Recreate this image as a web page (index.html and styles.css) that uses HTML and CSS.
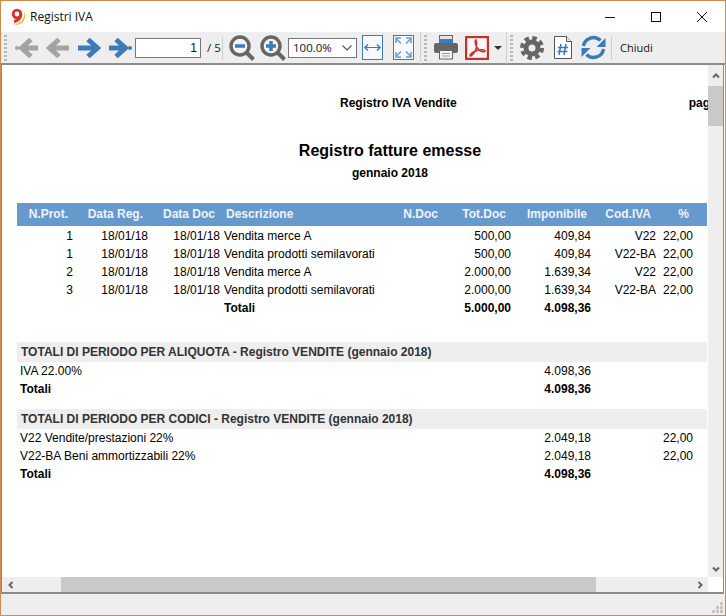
FILE: index.html

```html
<!DOCTYPE html>
<html lang="it">
<head>
  <meta charset="UTF-8" />
  <title>Registri IVA</title>
  <link rel="stylesheet" href="styles.css">
</head>
<body>
  <svg class="defs" width="0" height="0">
    <symbol id="arrow" viewBox="0 0 24 22">
      <path d="M1 11H19" fill="none" stroke="currentColor" stroke-width="5"/>
      <path d="M11 2.500l9.500 8.500-9.500 8.500" fill="none" stroke="currentColor" stroke-width="5"/>
    </symbol>
    <symbol id="arrow-end" viewBox="0 0 24 22">
      <path d="M1 11H17" fill="none" stroke="currentColor" stroke-width="5"/>
      <path d="M8 2.500l9.500 8.500-9.500 8.500" fill="none" stroke="currentColor" stroke-width="5"/>
      <path d="M17 11h5" fill="none" stroke="currentColor" stroke-width="1.500"/>
      <circle cx="22" cy="11" r="2" fill="currentColor"/>
    </symbol>
    <symbol id="chev" viewBox="0 0 8 8">
      <path d="M1 5.500l3-3 3 3" fill="none" stroke="#666" stroke-width="2"/>
    </symbol>
  </svg>

  <div class="window">
    <div class="titlebar">
      <svg class="logo" width="18" height="18" viewBox="0 0 18 18">
        <path d="M3 15c5 2 10 0 12-7 1-3 0-5-1-6 3 3 3 8 0 12-3 3-7 4-11 1z" fill="#e8c23a"/>
        <circle cx="8" cy="6" r="3.800" fill="#fff" stroke="#d8302a" stroke-width="2.800"/>
        <path d="M12 6c0 4-3 7-7 7.500" fill="none" stroke="#d8302a" stroke-width="3"/>
      </svg>
      <span class="title">Registri IVA</span>
      <div class="winbtns">
        <span class="winbtn"><svg width="12" height="12"><path d="M1 6.500h10" stroke="#111"/></svg></span>
        <span class="winbtn"><svg width="12" height="12"><rect x="1.500" y="1.500" width="9" height="9" fill="none" stroke="#111"/></svg></span>
        <span class="winbtn"><svg width="12" height="12"><path d="M1 1l10 10M11 1L1 11" stroke="#111"/></svg></span>
      </div>
    </div>

    <div class="toolbar">
      <span class="grip"></span>
      <span class="tool off"><svg class="flip" width="24" height="22"><use href="#arrow-end"/></svg></span>
      <span class="tool off"><svg class="flip" width="24" height="22"><use href="#arrow"/></svg></span>
      <span class="tool on"><svg width="24" height="22"><use href="#arrow"/></svg></span>
      <span class="tool on"><svg width="24" height="22"><use href="#arrow-end"/></svg></span>
      <input class="pagebox" type="text" value="1" />
      <span class="pagecount">/ 5</span>
      <span class="sep sep-a"></span>
      <span class="tool">
        <svg width="26" height="26" viewBox="0 0 26 26">
          <circle cx="11" cy="11" r="9" fill="#f4f4f4" stroke="#666" stroke-width="3.500"/>
          <path d="M17.500 17.500l7 7" stroke="#666" stroke-width="4"/>
          <path d="M6 11h10" stroke="#3d7ab8" stroke-width="3.500"/>
        </svg>
      </span>
      <span class="tool">
        <svg width="26" height="26" viewBox="0 0 26 26">
          <circle cx="11" cy="11" r="9" fill="#f4f4f4" stroke="#666" stroke-width="3.500"/>
          <path d="M17.500 17.500l7 7" stroke="#666" stroke-width="4"/>
          <path d="M6 11h10M11 6v10" stroke="#3d7ab8" stroke-width="3.500"/>
        </svg>
      </span>
      <div class="zoomsel">
        <span>100.0%</span>
        <svg width="12" height="8"><path d="M1.500 1.500l4.500 4.500 4.500-4.500" fill="none" stroke="#555" stroke-width="1.200"/></svg>
      </div>
      <span class="tool">
        <svg width="21" height="25" viewBox="0 0 21 25">
          <rect x=".5" y=".5" width="20" height="24" fill="#f6f8fb" stroke="#3d7ab8"/>
          <path d="M3 12.500h15" stroke="#3d7ab8"/>
          <path d="M6 9.500l-3 3 3 3M15 9.500l3 3-3 3" fill="none" stroke="#3d7ab8" stroke-width="1.500"/>
        </svg>
      </span>
      <span class="tool">
        <svg width="21" height="25" viewBox="0 0 21 25">
          <rect x=".5" y=".5" width="20" height="24" fill="#f6f8fb" stroke="#3d7ab8"/>
          <path d="M3 3.500l5 5M18 3.500l-5 5M3 21.500l5-5M18 21.500l-5-5" stroke="#6b9bcb" stroke-width="1.500"/>
          <path d="M3 8V3h5M13 3h5v5M3 17v5h5M18 17v5h-5" fill="none" stroke="#6b9bcb" stroke-width="1.500"/>
        </svg>
      </span>
      <span class="sep sep-b"></span>
      <span class="grip grip-b"></span>
      <span class="tool">
        <svg width="26" height="25" viewBox="0 0 26 25">
          <rect x="6.500" y=".5" width="13" height="8" fill="#e4e4e4" stroke="#666"/>
          <rect x="6" y="4" width="14" height="5" fill="#3d7ab8"/>
          <rect x="1" y="8" width="24" height="10" rx="2" fill="#666"/>
          <rect x="6.500" y="15.500" width="13" height="8.500" fill="#f4f4f4" stroke="#666"/>
          <path d="M9 18.500h8M9 21h8" stroke="#7aa3cc"/>
        </svg>
      </span>
      <span class="tool">
        <svg width="24" height="24" viewBox="0 0 24 24">
          <rect x="1" y="1" width="22" height="22" fill="#f7f7f7" stroke="#c8302c" stroke-width="2.400"/>
          <path d="M10.500 4c-1 3 1 7 3.500 10 2 2 6 2.500 6 1s-4-1.500-8-.5-7 3.500-7 5 3-.5 5-4 2-9 1-11.500z" fill="none" stroke="#c8302c" stroke-width="1.500"/>
        </svg>
      </span>
      <span class="caret"></span>
      <span class="sep sep-c"></span>
      <span class="grip grip-c"></span>
      <span class="tool">
        <svg width="24" height="24" viewBox="0 0 24 24">
          <circle cx="12" cy="12" r="10" fill="none" stroke="#666" stroke-width="4" stroke-dasharray="4.500 3.354"/>
          <circle cx="12" cy="12" r="6" fill="none" stroke="#666" stroke-width="5"/>
        </svg>
      </span>
      <span class="tool">
        <svg width="18" height="23" viewBox="0 0 18 23">
          <path d="M.5.500h12l5 5v17H.5z" fill="#fff" stroke="#555"/>
          <path d="M12.500.500v5h5" fill="#eee" stroke="#555"/>
          <path d="M7 8l-2 11M12 8l-2 11M4 11.500h10M3.500 15.500h10" fill="none" stroke="#3d7ab8" stroke-width="1.500"/>
        </svg>
      </span>
      <span class="tool">
        <svg width="25" height="25" viewBox="0 0 25 25">
          <path d="M2.500 11a10 10 0 0 1 17-5.500" fill="none" stroke="#3d7ab8" stroke-width="3.400"/>
          <path d="M22.500 14a10 10 0 0 1-17 5.500" fill="none" stroke="#3d7ab8" stroke-width="3.400"/>
          <path d="M24.500 3v9h-9zM.5 22v-9h9z" fill="#3d7ab8"/>
        </svg>
      </span>
      <span class="sep sep-d"></span>
      <span class="closebtn">Chiudi</span>
    </div>

    <div class="viewer">
      <div class="page">
        <div class="report">
          <div class="runhead">
            <span class="runtitle">Registro IVA Vendite</span>
            <span class="runpage">pag</span>
          </div>
          <h1>Registro fatture emesse</h1>
          <h2>gennaio 2018</h2>
          <table class="reg">
            <colgroup>
              <col class="c1"><col class="c2"><col class="c3"><col class="c4"><col class="c5">
              <col class="c6"><col class="c7"><col class="c8"><col class="c9"><col class="c10">
            </colgroup>
            <thead>
              <tr>
                <th>N.Prot.</th><th>Data Reg.</th><th>Data Doc</th><th class="left">Descrizione</th><th>N.Doc</th>
                <th>Tot.Doc</th><th class="tight">Imponibile</th><th>Cod.IVA</th><th class="tight">%</th><th></th>
              </tr>
            </thead>
            <tbody>
              <tr><td>1</td><td>18/01/18</td><td>18/01/18</td><td class="left">Vendita merce A</td><td></td><td>500,00</td><td>409,84</td><td>V22</td><td>22,00</td><td></td></tr>
              <tr><td>1</td><td>18/01/18</td><td>18/01/18</td><td class="left">Vendita prodotti semilavorati</td><td></td><td>500,00</td><td>409,84</td><td>V22-BA</td><td>22,00</td><td></td></tr>
              <tr><td>2</td><td>18/01/18</td><td>18/01/18</td><td class="left">Vendita merce A</td><td></td><td>2.000,00</td><td>1.639,34</td><td>V22</td><td>22,00</td><td></td></tr>
              <tr><td>3</td><td>18/01/18</td><td>18/01/18</td><td class="left">Vendita prodotti semilavorati</td><td></td><td>2.000,00</td><td>1.639,34</td><td>V22-BA</td><td>22,00</td><td></td></tr>
              <tr class="tot"><td></td><td></td><td></td><td class="left">Totali</td><td></td><td>5.000,00</td><td>4.098,36</td><td></td><td></td><td></td></tr>
            </tbody>
            <tbody>
              <tr class="gap gap-a"><td colspan="10"></td></tr>
              <tr class="band"><td colspan="10">TOTALI DI PERIODO PER ALIQUOTA - Registro VENDITE (gennaio 2018)</td></tr>
              <tr><td class="left lab" colspan="6">IVA 22.00%</td><td>4.098,36</td><td></td><td></td><td></td></tr>
              <tr class="tot"><td class="left lab" colspan="6">Totali</td><td>4.098,36</td><td></td><td></td><td></td></tr>
            </tbody>
            <tbody>
              <tr class="gap gap-b"><td colspan="10"></td></tr>
              <tr class="band"><td colspan="10">TOTALI DI PERIODO PER CODICI - Registro VENDITE (gennaio 2018)</td></tr>
              <tr><td class="left lab" colspan="6">V22 Vendite/prestazioni 22%</td><td>2.049,18</td><td></td><td>22,00</td><td></td></tr>
              <tr><td class="left lab" colspan="6">V22-BA Beni ammortizzabili 22%</td><td>2.049,18</td><td></td><td>22,00</td><td></td></tr>
              <tr class="tot"><td class="left lab" colspan="6">Totali</td><td>4.098,36</td><td></td><td></td><td></td></tr>
            </tbody>
          </table>
        </div>
      </div>
      <div class="vbar">
        <span class="sbtn"><svg width="8" height="8"><use href="#chev"/></svg></span>
        <span class="vthumb"></span>
        <span class="sbtn sbtn-end"><svg class="down" width="8" height="8"><use href="#chev"/></svg></span>
      </div>
      <div class="hbar">
        <span class="hbtn"><svg class="left-chev" width="8" height="8"><use href="#chev"/></svg></span>
        <span class="hthumb"></span>
        <span class="hbtn hbtn-end"><svg class="right-chev" width="8" height="8"><use href="#chev"/></svg></span>
      </div>
      <div class="corner"></div>
    </div>

    <div class="status">
      <svg width="12" height="12" viewBox="0 0 12 12">
        <path d="M8 0h3v3H8zM4 4h3v3H4zM8 4h3v3H8zM0 8h3v3H0zM4 8h3v3H4zM8 8h3v3H8z" fill="#c4c4c4"/>
      </svg>
    </div>
  </div>
</body>
</html>
```

FILE: styles.css

```css
* {
  box-sizing: border-box;
}
body {
  margin: 0;
  font-family: "Liberation Sans", Arial, sans-serif;
  font-size: 12px;
  background: #fff;
}
.defs {
  position: absolute;
}
.window {
  width: 726px;
  height: 616px;
  border: 1px solid #d08a50;
  display: flex;
  flex-direction: column;
  background: #fff;
  overflow: hidden;
}

/* barra titolo */
.titlebar {
  height: 31px;
  display: flex;
  align-items: center;
  padding-left: 8px;
  flex: none;
}
.title {
  font-family: "Open Sans", sans-serif;
  font-size: 12px;
  margin-left: 3px;
  color: #111;
}
.winbtns {
  margin-left: auto;
  display: flex;
}
.winbtn {
  width: 46px;
  height: 30px;
  display: flex;
  align-items: center;
  justify-content: center;
}

/* toolbar */
.toolbar {
  height: 33px;
  flex: none;
  display: flex;
  align-items: center;
  background: #eeeeee;
  border-bottom: 2px solid #8c8c8c;
  padding-left: 3px;
}
.grip {
  width: 3px;
  height: 26px;
  margin-right: 4px;
  background: repeating-linear-gradient(#b8b8b8 0 2px, transparent 2px 4px);
}
.tool {
  width: 31px;
  height: 30px;
  display: flex;
  align-items: center;
  justify-content: center;
  flex: none;
}
.tool.off {
  color: #a3a3a3;
}
.tool.on {
  color: #3d7ab8;
}
.flip {
  transform: scaleX(-1);
}
.pagebox {
  width: 66px;
  height: 20px;
  border: 1px solid #777;
  background: #fff;
  padding: 0 3px;
  text-align: right;
  font: 12px "Liberation Sans", sans-serif;
  color: #111;
}
.pagecount {
  margin-left: 6px;
  width: 15px;
  font-size: 11.500px;
  color: #222;
  font-family: "Open Sans", sans-serif;
}
.sep {
  width: 1px;
  height: 24px;
  background: #cfcfcf;
  flex: none;
}
.sep-a {
  margin-right: 3px;
}
.sep-b {
  margin-left: 1px;
  height: 32px;
}
.grip-b {
  margin-left: 3px;
  margin-right: 3px;
}
.sep-c {
  margin-left: 2px;
  height: 32px;
}
.grip-c {
  margin-left: 3px;
  margin-right: 3px;
}
.sep-d {
  margin-left: 2px;
}
.zoomsel {
  width: 69px;
  height: 20px;
  border: 1px solid #777;
  background: #fff;
  display: flex;
  align-items: center;
  justify-content: space-between;
  padding: 0 3px 0 4px;
  font-family: "Open Sans", sans-serif;
  font-size: 11.500px;
  color: #111;
  flex: none;
}
.caret {
  width: 0;
  height: 0;
  margin-left: 2px;
  margin-right: 2px;
  border-left: 4px solid transparent;
  border-right: 4px solid transparent;
  border-top: 4px solid #333;
  flex: none;
}
.closebtn {
  margin-left: 8px;
  font-family: "Open Sans", sans-serif;
  font-size: 11px;
  color: #111;
}

/* area documento */
.viewer {
  flex: none;
  height: 529px;
  margin-right: 1px;
  border-left: 1px solid #8c8c8c;
  border-right: 1px solid #8c8c8c;
  border-bottom: 2px solid #8c8c8c;
  display: grid;
  grid-template-columns: 706px 15px;
  grid-template-rows: 512px 15px;
}
.page {
  overflow: hidden;
  background: #fff;
}
.report {
  width: 776px;
  padding-top: 31px;
  color: #000;
}
.runhead {
  display: flex;
  padding-left: 338px;
  height: 15px;
  font-weight: bold;
  white-space: nowrap;
}
.runpage {
  margin-left: 232px;
}
h1 {
  margin: 30px 0 0;
  font-size: 16px;
  line-height: 20px;
  text-align: center;
}
h2 {
  margin: 5px 0 0;
  font-size: 12px;
  line-height: 15px;
  text-align: center;
}
.reg {
  margin: 22px 0 0 15px;
  width: 690px;
  table-layout: fixed;
  border-collapse: collapse;
}
.c1 { width: 56px; }
.c2 { width: 75px; }
.c3 { width: 72px; }
.c4 { width: 160px; }
.c5 { width: 63px; }
.c6 { width: 68px; }
.c7 { width: 80px; }
.c8 { width: 65px; }
.c9 { width: 37px; }
.c10 { width: 14px; }
.reg th {
  background: #6699cc;
  color: #eef3fa;
  height: 23px;
  padding: 0 5px 0 0;
  text-align: right;
  font-weight: bold;
  white-space: nowrap;
}
.reg th.tight {
  padding-right: 4px;
}
.reg th.left {
  padding: 0 0 0 6px;
  text-align: left;
}
.reg thead {
  border-bottom: 1px solid #fff;
}
.reg td {
  height: 18px;
  padding: 0;
  text-align: right;
  white-space: nowrap;
  line-height: 18px;
}
.reg td.left {
  padding-left: 4px;
  text-align: left;
}
.reg td.lab {
  padding-left: 3px;
}
.tot td {
  font-weight: bold;
}
.reg .gap td {
  padding: 0;
  line-height: 0;
}
.reg .gap-a td {
  height: 25px;
}
.reg .gap-b td {
  height: 11px;
}
.reg .band td {
  height: 20px;
  padding-left: 4px;
  text-align: left;
  background: #eeeeee;
  color: #333;
  font-weight: bold;
}

/* scrollbar */
.vbar {
  background: #eeeeee;
  display: flex;
  flex-direction: column;
  align-items: stretch;
}
.sbtn {
  height: 21px;
  display: flex;
  align-items: center;
  justify-content: center;
  flex: none;
}
.sbtn-end {
  margin-top: auto;
  height: 17px;
}
.vthumb {
  height: 40px;
  background: #c9c9c9;
  flex: none;
}
.down {
  transform: rotate(180deg);
}
.hbar {
  background: #eeeeee;
  display: flex;
  align-items: stretch;
}
.hbtn {
  width: 17px;
  display: flex;
  align-items: center;
  justify-content: center;
  flex: none;
}
.hbtn-end {
  margin-left: auto;
}
.hthumb {
  margin-left: 42px;
  width: 535px;
  background: #c9c9c9;
  flex: none;
}
.left-chev {
  transform: rotate(-90deg);
}
.right-chev {
  transform: rotate(90deg);
}
.corner {
  background: #fff;
}

.status {
  flex: 1;
  background: #eeeeee;
  display: flex;
  align-items: flex-end;
  justify-content: flex-end;
  padding: 0 1px 1px 0;
}
```
